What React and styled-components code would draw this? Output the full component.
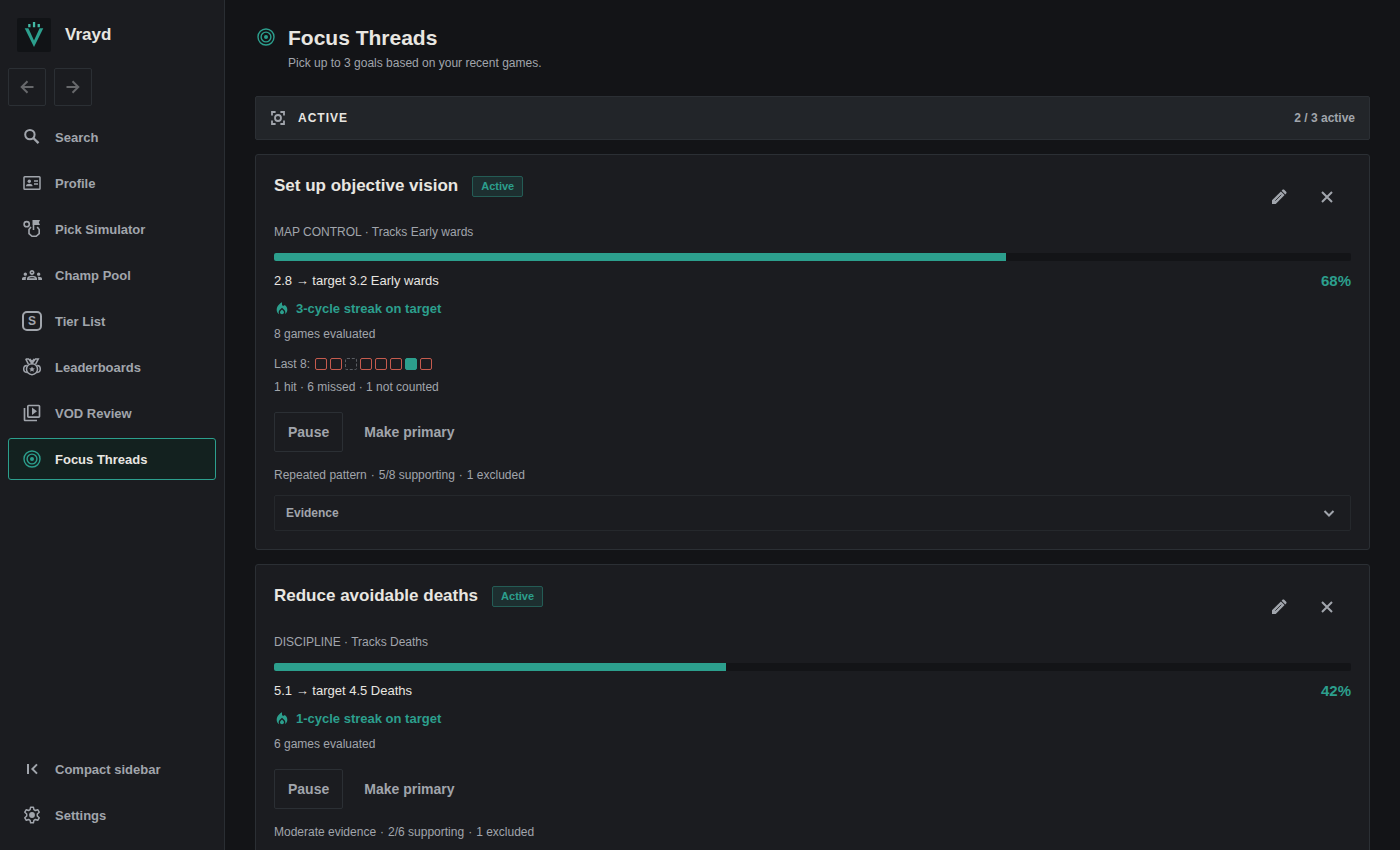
import React from "react";
import styled, { createGlobalStyle, css } from "styled-components";
import {
  MdLocalFireDepartment,
  MdOutlineGroups,
  MdOutlineVideoLibrary,
} from "react-icons/md";

const LogoMark = () => (
  <svg width="34" height="34" viewBox="0 0 34 34" fill="none" aria-hidden="true">
    <path d="M7.7 10.3h3.7L17 22.5l5.6-12.2h3.7L17 29z" fill="#2c9f8d" />
    <path d="M11.2 6h2.3v3.3h-2.3zM15.9 4h2.3v5.3h-2.3zM20.6 6h2.3v3.3h-2.3z" fill="#43b9a5" />
  </svg>
);

const LineIcon = ({ children, width = 1.5 }) => (
  <svg width="20" height="20" viewBox="0 0 20 20" fill="none" stroke="currentColor" strokeWidth={width} aria-hidden="true">
    {children}
  </svg>
);

const BackIcon = () => (
  <LineIcon width={2}><path d="M16.500 10H5M10.500 4.200 4.700 10l5.800 5.800" /></LineIcon>
);

const ForwardIcon = () => (
  <LineIcon width={2}><path d="M3.500 10H15M9.500 4.200l5.800 5.800-5.800 5.800" /></LineIcon>
);

const SearchIcon = () => (
  <LineIcon width={2}>
    <circle cx="7.900" cy="7.600" r="4.700" />
    <path d="m11.300 11 5.200 5.200" strokeWidth="2.400" />
  </LineIcon>
);

const CollapseIcon = () => (
  <LineIcon width={2}><path d="M6 5v10M15 5.400 10.400 10l4.600 4.600" /></LineIcon>
);

const CloseIcon = () => (
  <LineIcon width={2}><path d="m5 5 10 10M15 5 5 15" /></LineIcon>
);

const ChevronIcon = () => (
  <LineIcon width={2}><path d="m5.500 8 4.500 4.500L14.500 8" /></LineIcon>
);

const TargetIcon = () => (
  <LineIcon width={1.4}>
    <circle cx="10" cy="10" r="8" />
    <circle cx="10" cy="10" r="4.9" />
    <circle cx="10" cy="10" r="2" fill="currentColor" stroke="none" />
  </LineIcon>
);

const ProfileIcon = () => (
  <LineIcon>
    <rect x="2" y="3.7" width="16" height="12.6" rx="0.8" />
    <circle cx="7.3" cy="8.2" r="1.7" fill="currentColor" stroke="none" />
    <path d="M4 13.3c0-1.8 1.6-2.5 3.3-2.5s3.3.7 3.3 2.5z" fill="currentColor" stroke="none" />
    <path d="M12 8h4M12 11h4" />
  </LineIcon>
);

const PickIcon = () => (
  <LineIcon width={1.6}>
    <circle cx="4.7" cy="5.2" r="2.6" />
    <path d="M9 8 7 10.6v4l3 2.7h4.2l3-2.7v-4L15.2 8" />
    <path d="M11.5 1v10" />
    <path d="M10.7 1H18l-1.2 2.5L18 6h-7.3z" fill="currentColor" stroke="none" />
  </LineIcon>
);

const MedalIcon = () => (
  <LineIcon>
    <path d="M3.7 1.9h2.8L10 6.6l3.5-4.7h2.8l-2.7 5.2M3.7 1.9l2.7 5.2M7.8 1.9 10 4.6l2.2-2.7" />
    <circle cx="10" cy="12.2" r="5.5" />
    <path d="M4.9 8.6c-2 0-3.200 1.600-3.200 3.500s1.200 3.300 3.200 3.300M15.100 8.600c2 0 3.200 1.600 3.200 3.500s-1.200 3.300-3.200 3.300" />
    <path d="m10 9.400.9 1.800 2 .2-1.500 1.400.4 2-1.800-1-1.800 1 .4-2-1.500-1.400 2-.2z" fill="currentColor" stroke="none" />
  </LineIcon>
);

const GearIcon = () => (
  <LineIcon>
    <path
      d="M8.6 2.2h2.8l.5 2.4 1.500.9 2.300-.8 1.500 2.500-1.900 1.800v2l1.900 1.800-1.500 2.500-2.300-.8-1.500.9-.5 2.400H8.600l-.5-2.400-1.500-.9-2.300.8-1.500-2.500L4.700 11V9L2.800 7.200l1.500-2.500 2.300.8 1.500-.9z"
      strokeLinejoin="round"
    />
    <circle cx="10" cy="10" r="2.9" fill="currentColor" stroke="none" />
  </LineIcon>
);

const FocusFrameIcon = () => (
  <svg width="16" height="16" viewBox="0 0 16 16" fill="none" stroke="currentColor" strokeWidth="1.8" aria-hidden="true">
    <path d="M2 5.600V2h3.600M10.400 2H14v3.600M14 10.400V14h-3.600M5.600 14H2v-3.600" />
    <circle cx="8" cy="8" r="3" />
  </svg>
);

const PencilIcon = () => (
  <svg width="16" height="16" viewBox="0 0 16 16" fill="currentColor" aria-hidden="true">
    <path d="M1 15v-3.700l8.900-8.900 3.700 3.700L4.700 15z" />
    <path d="m10.600 1.700.9-.9c.5-.5 1.200-.5 1.700 0l2 2c.5.5.5 1.200 0 1.700l-.9.9z" />
    <path d="m4.300 11.700 6-6" stroke="#1b1c20" strokeWidth="0.800" />
  </svg>
);

const navItems = [
  { label: "Search", icon: <SearchIcon /> },
  { label: "Profile", icon: <ProfileIcon /> },
  { label: "Pick Simulator", icon: <PickIcon /> },
  { label: "Champ Pool", icon: <MdOutlineGroups size={20} /> },
  { label: "Tier List", tier: "S" },
  { label: "Leaderboards", icon: <MedalIcon /> },
  { label: "VOD Review", icon: <MdOutlineVideoLibrary size={20} /> },
  { label: "Focus Threads", icon: <TargetIcon />, active: true },
];

const threads = [
  {
    id: "vision",
    title: "Set up objective vision",
    meta: "MAP CONTROL · Tracks Early wards",
    progress: 68,
    value: "2.8 → target 3.2 Early wards",
    streak: "3-cycle streak on target",
    games: "8 games evaluated",
    history: ["miss", "miss", "skip", "miss", "miss", "miss", "hit", "miss"],
    summary: "1 hit · 6 missed · 1 not counted",
    evidence: ["Repeated pattern", "5/8 supporting", "1 excluded"],
  },
  {
    id: "deaths",
    title: "Reduce avoidable deaths",
    meta: "DISCIPLINE · Tracks Deaths",
    progress: 42,
    value: "5.1 → target 4.5 Deaths",
    streak: "1-cycle streak on target",
    games: "6 games evaluated",
    evidence: ["Moderate evidence", "2/6 supporting", "1 excluded"],
  },
];

const ThreadCard = ({ thread }) => (
  <Card>
    <CardHead>
      <TitleRow>
        <CardTitle>{thread.title}</CardTitle>
        <Badge>Active</Badge>
      </TitleRow>
      <Actions>
        <IconButton aria-label="Edit"><PencilIcon /></IconButton>
        <IconButton aria-label="Remove"><CloseIcon /></IconButton>
      </Actions>
    </CardHead>
    <Meta>{thread.meta}</Meta>
    <Track role="progressbar" aria-valuenow={thread.progress} aria-label={thread.title}>
      <Fill style={{ width: `${thread.progress}%` }} />
    </Track>
    <ValueRow>
      <span>{thread.value}</span>
      <Percent>{thread.progress}%</Percent>
    </ValueRow>
    <Streak>
      <MdLocalFireDepartment size={16} />
      {thread.streak}
    </Streak>
    <Small>{thread.games}</Small>
    {thread.history && (
      <History>
        <HistoryRow>
          <span>Last {thread.history.length}:</span>
          <Pips>
            {thread.history.map((kind, i) => (
              <Pip key={i} $kind={kind} />
            ))}
          </Pips>
        </HistoryRow>
        <Small>{thread.summary}</Small>
      </History>
    )}
    <ButtonRow>
      <TextButton $outlined>Pause</TextButton>
      <TextButton>Make primary</TextButton>
    </ButtonRow>
    <EvidenceLine>
      {thread.evidence.map((part, i) => (
        <React.Fragment key={part}>
          {i > 0 && <span>·</span>}
          <span>{part}</span>
        </React.Fragment>
      ))}
    </EvidenceLine>
    <EvidenceButton>
      Evidence
      <ChevronIcon />
    </EvidenceButton>
  </Card>
);

const App = () => {
  return (
    <Page>
      <GlobalStyle />
      <Sidebar>
        <Brand>
          <LogoBox><LogoMark /></LogoBox>
          <BrandName>Vrayd</BrandName>
        </Brand>
        <BackForward>
          <SquareButton aria-label="Back"><BackIcon /></SquareButton>
          <SquareButton aria-label="Forward"><ForwardIcon /></SquareButton>
        </BackForward>
        <Nav>
          {navItems.map((item) => (
            <NavLink key={item.label} href="#" $active={item.active}>
              {item.tier ? (
                <TierBox aria-hidden="true">{item.tier}</TierBox>
              ) : (
                <NavIcon>{item.icon}</NavIcon>
              )}
              {item.label}
            </NavLink>
          ))}
        </Nav>
        <BottomNav>
          <NavLink as="button">
            <NavIcon><CollapseIcon /></NavIcon>
            Compact sidebar
          </NavLink>
          <NavLink href="#">
            <NavIcon><GearIcon /></NavIcon>
            Settings
          </NavLink>
        </BottomNav>
      </Sidebar>
      <Main>
        <PageHeader>
          <HeaderIcon><TargetIcon /></HeaderIcon>
          <div>
            <Heading>Focus Threads</Heading>
            <SubHeading>Pick up to 3 goals based on your recent games.</SubHeading>
          </div>
        </PageHeader>
        <SectionBar>
          <FocusFrameIcon />
          <SectionTitle>ACTIVE</SectionTitle>
          <SectionCount>2 / 3 active</SectionCount>
        </SectionBar>
        {threads.map((thread) => (
          <ThreadCard key={thread.id} thread={thread} />
        ))}
      </Main>
    </Page>
  );
};

export default App;

// Styled Components
const GlobalStyle = createGlobalStyle`
  * {
    box-sizing: border-box;
  }

  body {
    margin: 0;
    background: #131417;
    color: #e8e6e1;
    font-family: "Liberation Sans", Arial, sans-serif;
    font-size: 13px;
  }

  button {
    font-family: inherit;
    cursor: pointer;
  }
`;

const Page = styled.div`
  display: flex;
  height: 100vh;
`;

const Sidebar = styled.aside`
  display: flex;
  flex-direction: column;
  flex: 0 0 225px;
  padding: 18px 8px 14px;
  background: #1b1c20;
  border-right: 1px solid #2a2e33;
`;

const Brand = styled.div`
  display: flex;
  align-items: center;
  gap: 14px;
  padding-left: 9px;
`;

const LogoBox = styled.div`
  display: flex;
  border-radius: 2px;
  background: #111316;
`;

const BrandName = styled.span`
  font-size: 17px;
  font-weight: 700;
`;

const BackForward = styled.div`
  display: flex;
  gap: 8px;
  margin: 16px 0 10px;
`;

const SquareButton = styled.button`
  display: grid;
  place-items: center;
  width: 38px;
  height: 38px;
  padding: 0;
  border: 1px solid #2b2f34;
  border-radius: 2px;
  background: transparent;
  color: #67686b;
`;

const Nav = styled.nav`
  display: flex;
  flex-direction: column;
  gap: 4px;
`;

const BottomNav = styled(Nav)`
  margin-top: auto;
`;

const NavLink = styled.a`
  display: flex;
  align-items: center;
  gap: 13px;
  height: 42px;
  padding: 0 13px;
  border: 1px solid transparent;
  border-radius: 3px;
  background: transparent;
  color: #a1a5ac;
  font-size: 13px;
  font-weight: 700;
  text-decoration: none;

  ${({ $active }) =>
    $active &&
    css`
      border-color: #2c9f8d;
      background: #13211f;
      color: #e8e6e1;

      svg {
        color: #2c9f8d;
      }
    `}
`;

const NavIcon = styled.span`
  display: flex;
`;

const TierBox = styled.span`
  display: grid;
  place-items: center;
  width: 20px;
  height: 20px;
  border: 2px solid currentColor;
  border-radius: 5px;
  font-size: 12px;
  line-height: 1;
  font-weight: 700;
`;

const Main = styled.main`
  flex: 1;
  min-width: 0;
  padding: 24px 30px;
  overflow-y: auto;
  scrollbar-width: none;
`;

const PageHeader = styled.header`
  display: flex;
  gap: 12px;
  margin-bottom: 22px;
`;

const HeaderIcon = styled.div`
  display: flex;
  padding: 3px 0 0 1px;
  color: #2c9f8d;
`;

const Heading = styled.h1`
  margin: 0;
  font-size: 21px;
  line-height: 28px;
`;

const SubHeading = styled.p`
  margin: 0;
  color: #a1a5ac;
  font-size: 12px;
  line-height: 22px;
`;

const SectionBar = styled.div`
  display: flex;
  align-items: center;
  gap: 12px;
  height: 44px;
  padding: 0 14px;
  border: 1px solid #2b2f34;
  border-radius: 2px;
  background: #222529;
  color: #a1a5ac;
`;

const SectionTitle = styled.h2`
  margin: 0;
  color: #e8e6e1;
  font-size: 12px;
  letter-spacing: 1px;
`;

const SectionCount = styled.span`
  margin-left: auto;
  font-size: 12px;
  font-weight: 700;
`;

const Card = styled.article`
  display: flex;
  flex-direction: column;
  margin-top: 14px;
  padding: 18px;
  border: 1px solid #2b2f34;
  border-radius: 3px;
  background: #1b1c20;
`;

const CardHead = styled.div`
  display: flex;
  justify-content: space-between;
`;

const TitleRow = styled.div`
  display: flex;
  align-items: center;
  gap: 14px;
  height: 26px;
`;

const CardTitle = styled.h3`
  margin: 0;
  font-size: 17px;
`;

const Badge = styled.span`
  padding: 0 8px;
  border: 1px solid #245c55;
  border-radius: 2px;
  background: #1d2f30;
  color: #2c9f8d;
  font-size: 11px;
  line-height: 19px;
  font-weight: 700;
`;

const Actions = styled.div`
  display: flex;
`;

const IconButton = styled.button`
  display: grid;
  place-items: center;
  width: 48px;
  height: 48px;
  padding: 0;
  border: none;
  background: transparent;
  color: #a1a5ac;
`;

const Meta = styled.p`
  margin: 2px 0 12px;
  color: #a1a5ac;
  font-size: 12px;
  line-height: 18px;
`;

const Track = styled.div`
  height: 8px;
  border-radius: 2px;
  background: #131417;
  overflow: hidden;
`;

const Fill = styled.div`
  height: 100%;
  background: #2c9f8d;
`;

const ValueRow = styled.div`
  display: flex;
  justify-content: space-between;
  margin: 10px 0 9px;
  font-size: 13px;
  line-height: 20px;
`;

const Percent = styled.span`
  color: #2c9f8d;
  font-size: 15px;
  font-weight: 700;
`;

const Streak = styled.div`
  display: flex;
  align-items: center;
  gap: 6px;
  margin-bottom: 7px;
  color: #2c9f8d;
  font-size: 13px;
  line-height: 18px;
  font-weight: 700;
`;

const Small = styled.div`
  color: #a1a5ac;
  font-size: 12px;
  line-height: 18px;
`;

const History = styled.div`
  display: flex;
  flex-direction: column;
  gap: 5px;
  margin-top: 12px;
`;

const HistoryRow = styled.div`
  display: flex;
  align-items: center;
  gap: 5px;
  color: #a1a5ac;
  font-size: 12px;
  line-height: 18px;
`;

const Pips = styled.div`
  display: flex;
  gap: 3px;
`;

const pipColors = {
  hit: "#2c9f8d",
  miss: "#c65b4e",
  skip: "#5a5d62",
};

const Pip = styled.span`
  width: 12px;
  height: 12px;
  border: 1px ${({ $kind }) => ($kind === "skip" ? "dashed" : "solid")} ${({ $kind }) => pipColors[$kind]};
  border-radius: 2px;
  background: ${({ $kind }) => ($kind === "hit" ? pipColors.hit : "transparent")};
`;

const ButtonRow = styled.div`
  display: flex;
  gap: 7px;
  margin: 16px 0 14px;
`;

const TextButton = styled.button`
  height: 40px;
  padding: 0 13px;
  border: 1px solid ${({ $outlined }) => ($outlined ? "#2b2f34" : "transparent")};
  border-radius: 2px;
  background: transparent;
  color: #a1a5ac;
  font-size: 14px;
  font-weight: 700;
`;

const EvidenceLine = styled.div`
  display: flex;
  gap: 4px;
  margin-bottom: 11px;
  color: #a1a5ac;
  font-size: 12px;
  line-height: 18px;
`;

const EvidenceButton = styled.button`
  display: flex;
  align-items: center;
  justify-content: space-between;
  height: 36px;
  padding: 0 11px;
  border: 1px solid #25282c;
  border-radius: 2px;
  background: transparent;
  color: #a1a5ac;
  font-size: 12px;
  font-weight: 700;
`;
